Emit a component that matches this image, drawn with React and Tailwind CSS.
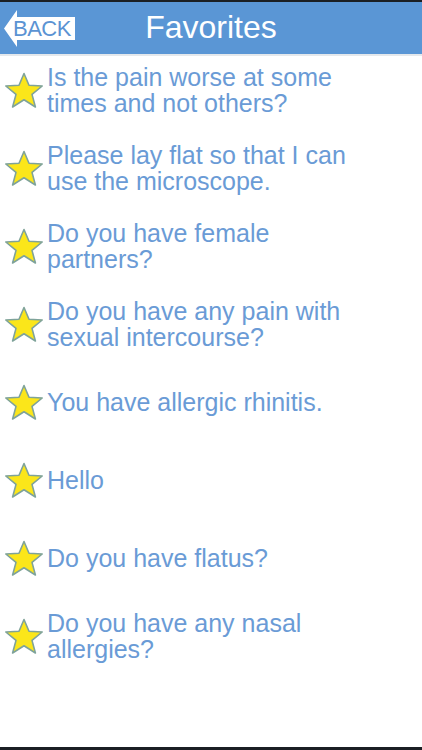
const ITEMS = [
  "Is the pain worse at some times and not others?",
  "Please lay flat so that I can use the microscope.",
  "Do you have female partners?",
  "Do you have any pain with sexual intercourse?",
  "You have allergic rhinitis.",
  "Hello",
  "Do you have flatus?",
  "Do you have any nasal allergies?",
];

function Star() {
  return (
    <svg width="40" height="37" viewBox="0 0 40 37" className="shrink-0">
      <path
        d="M20 1.5 L25 13.2 L38.2 14 L28 22.4 L31.4 35 L20 27.8 L8.6 35 L12 22.4 L1.8 14 L15 13.2 Z"
        fill="#fbe61a"
        stroke="#7fa39a"
        strokeWidth="1.6"
        strokeLinejoin="round"
      />
    </svg>
  );
}

function BackButton() {
  return (
    <div className="relative h-[38px] w-[72px]">
      <svg width="72" height="38" viewBox="0 0 72 38" className="absolute left-0 top-0">
        <path d="M0 18.5 L13 0 L13 7 L71 7 L71 30 L13 30 L13 37 Z" fill="#ffffff" />
      </svg>
      <span className="absolute left-[9px] top-[6px] text-[22px] leading-[26px] tracking-[-0.5px] text-[#5b93d3]">
        BACK
      </span>
    </div>
  );
}

export default function App() {
  return (
    <div className="flex h-[750px] flex-col bg-white font-['Liberation_Sans',Arial,sans-serif]">
      <div className="h-[2px] bg-[#1b1f24]" />
      <header className="relative flex h-[52px] items-center justify-center bg-[#5a96d5] pb-[3px]">
        <div className="absolute left-[4px] top-[8px]">
          <BackButton />
        </div>
        <h1 className="text-[32px] leading-none text-white">Favorites</h1>
      </header>
      <div className="h-[2px] bg-[#e4e8ec]" />
      <ul className="flex-1">
        {ITEMS.map((t) => (
          <li key={t} className="flex h-[78px] items-center pb-[10px]">
            <div className="ml-[4px] mr-[3px]">
              <Star />
            </div>
            <p className="w-[320px] text-[25px] leading-[26px] text-[#6a9bd6]">{t}</p>
          </li>
        ))}
      </ul>
      <div className="h-[3px] bg-[#1b1f24]" />
    </div>
  );
}
